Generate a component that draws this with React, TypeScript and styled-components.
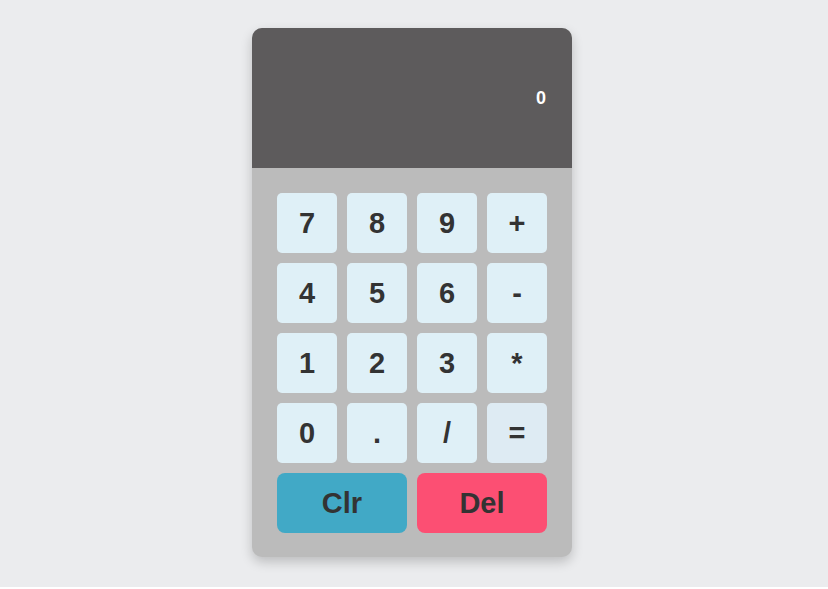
import React from "react";
import styled, { createGlobalStyle } from "styled-components";

const Global = createGlobalStyle`
  html, body { margin: 0; padding: 0; background: #ffffff; }
  body { font-family: "Liberation Sans", Arial, sans-serif; }
`;

const Page = styled.div`
  height: 587px;
  background: #ebecee;
  display: flex;
  justify-content: center;
  align-items: flex-start;
  padding: 28px 4px 0 0;
  box-sizing: border-box;
`;

const Calculator = styled.div`
  width: 320px;
  border-radius: 10px;
  overflow: hidden;
  background: #bbbbbb;
  box-shadow: 0 5px 12px rgba(0, 0, 0, 0.2);
`;

const Display = styled.div`
  height: 140px;
  background: #5d5b5c;
  display: flex;
  align-items: center;
  justify-content: flex-end;
  padding: 0 26px 0 25px;
  color: #ffffff;
  font-size: 18px;
  font-weight: bold;
  box-sizing: border-box;
`;

const Keypad = styled.div`
  display: grid;
  grid-template-columns: repeat(4, 60px);
  grid-auto-rows: 60px;
  gap: 10px;
  padding: 25px 25px 24px 25px;
`;

const Key = styled.button<{ $bg?: string; $span?: number }>`
  border: none;
  border-radius: ${(p) => (p.$span ? 8 : 5)}px;
  background: ${(p) => p.$bg || "#dff0f7"};
  color: #333333;
  font-family: "Liberation Sans", Arial, sans-serif;
  font-size: 29px;
  font-weight: bold;
  padding: 0;
  grid-column: span ${(p) => p.$span || 1};
  display: flex;
  align-items: center;
  justify-content: center;
  cursor: pointer;
`;

const keys = ["7", "8", "9", "+", "4", "5", "6", "-", "1", "2", "3", "*", "0", ".", "/"];

export default function App() {
  return (
    <>
      <Global />
      <Page>
        <Calculator>
          <Display>0</Display>
          <Keypad>
            {keys.map((k) => (
              <Key key={k}>{k}</Key>
            ))}
            <Key $bg="#deebf3">=</Key>
            <Key $span={2} $bg="#41a9c6">Clr</Key>
            <Key $span={2} $bg="#fc4f73">Del</Key>
          </Keypad>
        </Calculator>
      </Page>
    </>
  );
}
